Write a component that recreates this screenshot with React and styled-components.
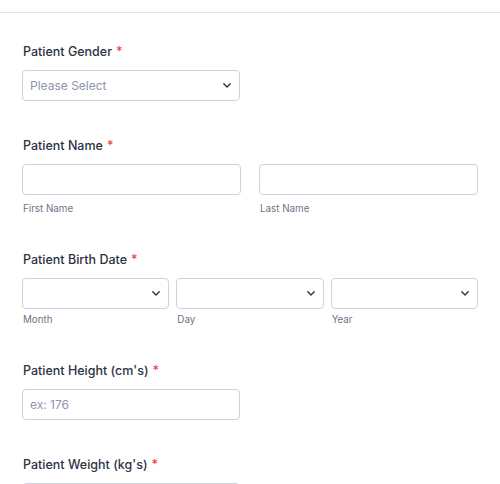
import React from "react";
import styled, { createGlobalStyle } from "styled-components";

const GlobalStyle = createGlobalStyle`
  body {
    margin: 0;
    background: #ffffff;
    font-family: Inter, "Noto Sans", sans-serif;
    color: #2c3345;
  }
`;

const Page = styled.div`
  padding-top: 12px;
`;

const TopLine = styled.div`
  border-top: 1px solid #e3e5eb;
`;

const Form = styled.div`
  padding: 30px 22px 0 22px;
  display: flex;
  flex-direction: column;
  gap: 36px;
`;

const Field = styled.div`
  display: flex;
  flex-direction: column;
`;

const Label = styled.div`
  font-size: 12.5px;
  line-height: 18px;
  font-weight: 500;
  color: #2c3345;
  padding-left: 1px;
  margin-bottom: 9px;
`;

const Required = styled.span`
  color: #f23a3c;
  margin-left: 4px;
`;

const Row = styled.div`
  display: grid;
  grid-template-columns: repeat(${(p) => p.cols}, 1fr);
  column-gap: ${(p) => p.gap}px;
`;

const Box = styled.div`
  box-sizing: border-box;
  width: ${(p) => (p.half ? "218px" : "100%")};
  height: 31px;
  border: 1px solid #cdd2dc;
  border-radius: 4px;
  background: #fff;
  display: flex;
  align-items: center;
  justify-content: space-between;
  padding: 0 8px 0 7px;
  font-size: 12px;
`;

const Placeholder = styled.span`
  color: #8f95aa;
`;

const SubLabel = styled.div`
  font-size: 9.8px;
  line-height: 12px;
  color: #6c7386;
  padding-left: 1px;
  margin-top: ${(p) => p.offset}px;
`;

const Chevron = () => (
  <svg width="8" height="5" viewBox="0 0 8 5" fill="none">
    <path
      d="M0.8 0.8l3.2 3.2 3.2-3.2"
      stroke="#2c3345"
      strokeWidth="1.4"
      strokeLinecap="round"
      strokeLinejoin="round"
    />
  </svg>
);

const Select = ({ half, placeholder }) => (
  <Box half={half}>
    <Placeholder>{placeholder}</Placeholder>
    <Chevron />
  </Box>
);

const App = () => {
  return (
    <Page>
      <GlobalStyle />
      <TopLine />
      <Form>
        <Field>
          <Label>
            Patient Gender<Required>*</Required>
          </Label>
          <Select half placeholder="Please Select" />
        </Field>

        <Field>
          <Label>
            Patient Name<Required>*</Required>
          </Label>
          <Row cols={2} gap={18}>
            <div>
              <Box />
              <SubLabel offset={8}>First Name</SubLabel>
            </div>
            <div>
              <Box />
              <SubLabel offset={8}>Last Name</SubLabel>
            </div>
          </Row>
        </Field>

        <Field>
          <Label>
            Patient Birth Date<Required>*</Required>
          </Label>
          <Row cols={3} gap={7}>
            <div>
              <Select />
              <SubLabel offset={5}>Month</SubLabel>
            </div>
            <div>
              <Select />
              <SubLabel offset={5}>Day</SubLabel>
            </div>
            <div>
              <Select />
              <SubLabel offset={5}>Year</SubLabel>
            </div>
          </Row>
        </Field>

        <Field>
          <Label>
            Patient Height (cm's)<Required>*</Required>
          </Label>
          <Box half>
            <Placeholder>ex: 176</Placeholder>
          </Box>
        </Field>

        <Field>
          <Label>
            Patient Weight (kg's)<Required>*</Required>
          </Label>
          <Box half />
        </Field>
      </Form>
    </Page>
  );
};

export default App;
